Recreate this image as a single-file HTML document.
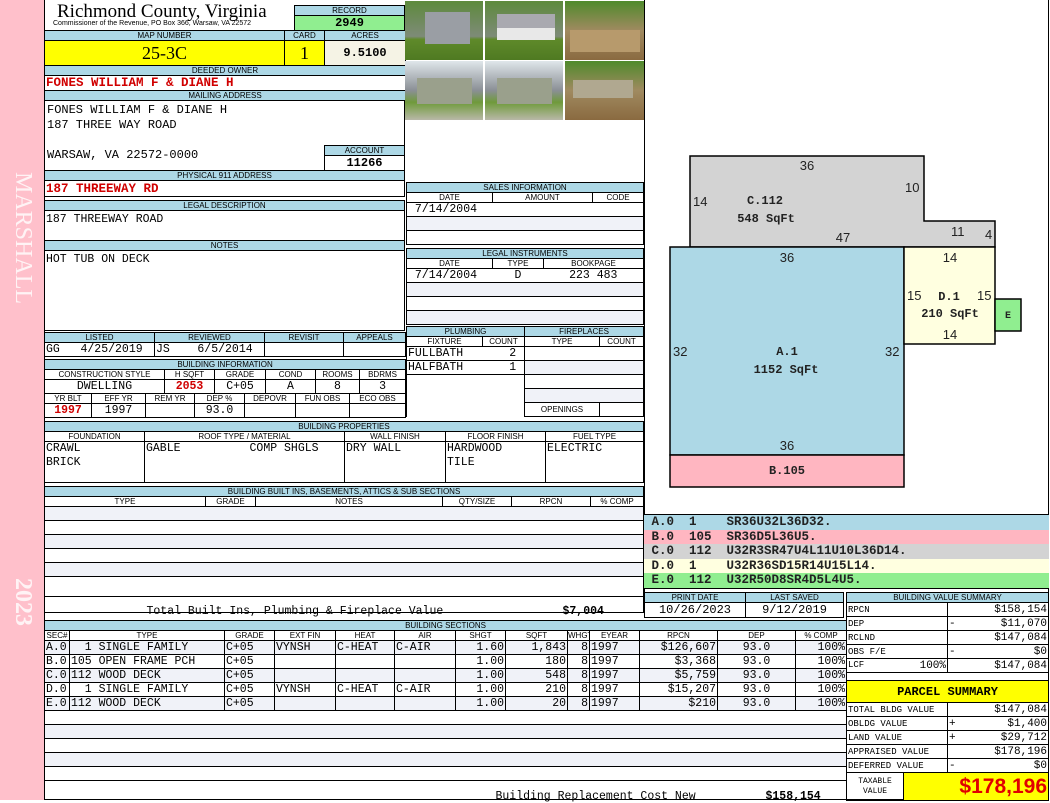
<!DOCTYPE html>
<html><head><meta charset="utf-8">
<style>
*{margin:0;padding:0;box-sizing:border-box}
body{width:1050px;height:800px;position:relative;background:#fff;overflow:hidden;font-family:"Liberation Sans",sans-serif}
.a{position:absolute}
table{border-collapse:collapse;table-layout:fixed;position:absolute}
td{border:1px solid #000;overflow:hidden;white-space:nowrap;padding:0 1px}
.h td,td.h{background:#add8e6;font:8px/9px "Liberation Sans",sans-serif;text-align:center;height:10px;padding:0}
.s td{font:8px/9px "Liberation Sans",sans-serif;text-align:center;height:10px;padding:0;background:#fff}
.m{font-family:"Liberation Mono",monospace;font-size:11.5px;line-height:13px}
.r td{height:14px;font-family:"Liberation Mono",monospace;font-size:11.5px;line-height:13px}
.alt{background:#f0f2f8}
.red{color:#d00000;font-weight:bold}
.c{text-align:center}.rt{text-align:right}
.box{position:absolute;border:1px solid #000;background:#fff}
.cr{height:14.5px;line-height:14.5px;white-space:pre;overflow:hidden}
</style></head><body>
<div class="a" style="left:0;top:0;width:44px;height:800px;background:#ffc0cb"></div>
<div class="a" style="left:8px;top:172px;width:30px;height:140px;"><div style="position:absolute;left:30px;top:0;transform-origin:0 0;transform:rotate(90deg);font:24px/30px 'Liberation Serif',serif;color:#fff3f5;white-space:nowrap">MARSHALL</div></div>
<div class="a" style="left:8px;top:578px;"><div style="position:absolute;left:30px;top:0;transform-origin:0 0;transform:rotate(90deg);font:bold 24px/30px 'Liberation Serif',serif;color:#fff3f5;white-space:nowrap">2023</div></div>
<div class="a" style="left:44px;top:0;width:1005px;height:800px;border:1px solid #000;border-top:none"></div>

<div class="a" style="left:57px;top:1px;font:19px/22px 'Liberation Serif',serif;color:#000">Richmond County, Virginia</div>
<div class="a" style="left:53px;top:20px;font:7px/8px 'Liberation Sans',sans-serif;white-space:nowrap">Commissioner of the Revenue, PO Box 366, Warsaw, VA 22572</div>
<table style="left:294px;top:5px;width:111px"><tr class="h"><td>RECORD</td></tr><tr><td class="c" style="background:#90ee90;font:bold 12px/13px 'Liberation Mono',monospace;height:15px">2949</td></tr></table>

<table style="left:44px;top:30px;width:361px"><colgroup><col style="width:240px"><col style="width:40px"><col style="width:81px"></colgroup>
<tr class="h"><td>MAP NUMBER</td><td>CARD</td><td>ACRES</td></tr>
<tr style="height:25px"><td class="c" style="background:#ffff00;font:18px 'Liberation Serif',serif">25-3C</td><td class="c" style="background:#ffff00;font:18px 'Liberation Serif',serif">1</td><td class="c" style="background:#f5f3e5;font:bold 12px 'Liberation Mono',monospace">9.5100</td></tr>
<tr class="h"><td colspan="3">DEEDED OWNER</td></tr>
<tr><td colspan="3" class="red" style="font-family:'Liberation Mono',monospace;font-size:12.5px;height:15px;line-height:14px">FONES WILLIAM F &amp; DIANE H</td></tr>
<tr class="h"><td colspan="3">MAILING ADDRESS</td></tr>
</table>
<div class="box" style="left:44px;top:100px;width:361px;height:71px"></div>
<div class="a m" style="left:47px;top:103px;font-size:12px;line-height:15px;white-space:pre">FONES WILLIAM F &amp; DIANE H
187 THREE WAY ROAD

WARSAW, VA 22572-0000</div>
<table style="left:324px;top:145px;width:81px"><tr class="h"><td>ACCOUNT</td></tr><tr><td class="c" style="font:bold 12px/13px 'Liberation Mono',monospace;height:15px">11266</td></tr></table>
<table style="left:44px;top:170px;width:361px"><tr class="h"><td>PHYSICAL 911 ADDRESS</td></tr><tr><td class="red" style="font-family:'Liberation Mono',monospace;font-size:12.5px;height:16px">187 THREEWAY RD</td></tr></table>

<table style="left:44px;top:200px;width:361px"><tr class="h"><td>LEGAL DESCRIPTION</td></tr><tr><td class="m" style="height:30px;vertical-align:top;padding-top:2px">187 THREEWAY ROAD</td></tr>
<tr class="h"><td>NOTES</td></tr><tr><td class="m" style="height:80px;vertical-align:top;padding-top:2px">HOT TUB ON DECK</td></tr></table>

<table style="left:44px;top:332px;width:361px"><colgroup><col style="width:110px"><col style="width:110px"><col style="width:79px"><col style="width:62px"></colgroup>
<tr class="h"><td>LISTED</td><td>REVIEWED</td><td>REVISIT</td><td>APPEALS</td></tr>
<tr class="r"><td>GG&nbsp;&nbsp;&nbsp;4/25/2019</td><td>JS&nbsp;&nbsp;&nbsp;&nbsp;6/5/2014</td><td></td><td></td></tr></table>

<table style="left:44px;top:359px;width:361px"><colgroup><col style="width:120px"><col style="width:50px"><col style="width:51px"><col style="width:50px"><col style="width:44px"><col style="width:46px"></colgroup>
<tr class="h"><td colspan="6">BUILDING INFORMATION</td></tr>
<tr class="s"><td>CONSTRUCTION STYLE</td><td>H SQFT</td><td>GRADE</td><td>COND</td><td>ROOMS</td><td>BDRMS</td></tr>
<tr class="r"><td class="c">DWELLING</td><td class="c red">2053</td><td class="c">C+05</td><td class="c">A</td><td class="c">8</td><td class="c">3</td></tr></table>
<table style="left:44px;top:393px;width:361px"><colgroup><col style="width:47px"><col style="width:54px"><col style="width:49px"><col style="width:50px"><col style="width:51px"><col style="width:54px"><col style="width:56px"></colgroup>
<tr class="s"><td>YR BLT</td><td>EFF YR</td><td>REM YR</td><td>DEP %</td><td>DEPOVR</td><td>FUN OBS</td><td>ECO OBS</td></tr>
<tr class="r"><td class="c red">1997</td><td class="c">1997</td><td></td><td class="c">93.0</td><td></td><td></td><td></td></tr></table>

<table style="left:44px;top:421px;width:599px"><colgroup><col style="width:100px"><col style="width:200px"><col style="width:101px"><col style="width:100px"><col style="width:98px"></colgroup>
<tr class="h"><td colspan="5">BUILDING PROPERTIES</td></tr>
<tr class="s"><td>FOUNDATION</td><td>ROOF TYPE / MATERIAL</td><td>WALL FINISH</td><td>FLOOR FINISH</td><td>FUEL TYPE</td></tr>
<tr><td class="m" style="height:41px;vertical-align:top;line-height:14px">CRAWL<br>BRICK</td><td class="m" style="vertical-align:top;white-space:pre">GABLE          COMP SHGLS</td><td class="m" style="vertical-align:top">DRY WALL</td><td class="m" style="vertical-align:top;line-height:14px">HARDWOOD<br>TILE</td><td class="m" style="vertical-align:top">ELECTRIC</td></tr></table>

<table style="left:44px;top:486px;width:599px"><colgroup><col style="width:161px"><col style="width:50px"><col style="width:187px"><col style="width:69px"><col style="width:79px"><col style="width:53px"></colgroup>
<tr class="h"><td colspan="6">BUILDING BUILT INS, BASEMENTS, ATTICS &amp; SUB SECTIONS</td></tr>
<tr class="s"><td>TYPE</td><td>GRADE</td><td>NOTES</td><td>QTY/SIZE</td><td>RPCN</td><td>% COMP</td></tr>
<tr class="r alt"><td colspan="6"></td></tr><tr class="r"><td colspan="6"></td></tr><tr class="r alt"><td colspan="6"></td></tr><tr class="r"><td colspan="6"></td></tr><tr class="r alt"><td colspan="6"></td></tr><tr class="r"><td colspan="6" style="height:20px"></td></tr>
<tr class="r"><td colspan="6" style="height:16px"><span style="position:absolute;left:102px;white-space:pre">Total Built Ins, Plumbing &amp; Fireplace Value</span><span style="position:absolute;left:518px;font-weight:bold">$7,004</span></td></tr></table>

<table style="left:44px;top:620px;width:802px"><colgroup><col style="width:25px"><col style="width:155px"><col style="width:50px"><col style="width:61px"><col style="width:59px"><col style="width:61px"><col style="width:50px"><col style="width:62px"><col style="width:22px"><col style="width:50px"><col style="width:78px"><col style="width:78px"><col style="width:51px"></colgroup>
<tr class="h"><td colspan="13">BUILDING SECTIONS</td></tr>
<tr class="s"><td>SEC#</td><td>TYPE</td><td>GRADE</td><td>EXT FIN</td><td>HEAT</td><td>AIR</td><td>SHGT</td><td>SQFT</td><td>WHGT</td><td>EYEAR</td><td>RPCN</td><td>DEP</td><td>% COMP</td></tr>
<tr class="r alt"><td>A.0</td><td>&nbsp;&nbsp;1 SINGLE FAMILY</td><td>C+05</td><td>VYNSH</td><td>C-HEAT</td><td>C-AIR</td><td class="rt">1.60</td><td class="rt">1,843</td><td class="rt">8</td><td>1997</td><td class="rt">$126,607</td><td class="c">93.0</td><td class="rt">100%</td></tr>
<tr class="r"><td>B.0</td><td>105 OPEN FRAME PCH</td><td>C+05</td><td></td><td></td><td></td><td class="rt">1.00</td><td class="rt">180</td><td class="rt">8</td><td>1997</td><td class="rt">$3,368</td><td class="c">93.0</td><td class="rt">100%</td></tr>
<tr class="r alt"><td>C.0</td><td>112 WOOD DECK</td><td>C+05</td><td></td><td></td><td></td><td class="rt">1.00</td><td class="rt">548</td><td class="rt">8</td><td>1997</td><td class="rt">$5,759</td><td class="c">93.0</td><td class="rt">100%</td></tr>
<tr class="r"><td>D.0</td><td>&nbsp;&nbsp;1 SINGLE FAMILY</td><td>C+05</td><td>VYNSH</td><td>C-HEAT</td><td>C-AIR</td><td class="rt">1.00</td><td class="rt">210</td><td class="rt">8</td><td>1997</td><td class="rt">$15,207</td><td class="c">93.0</td><td class="rt">100%</td></tr>
<tr class="r alt"><td>E.0</td><td>112 WOOD DECK</td><td>C+05</td><td></td><td></td><td></td><td class="rt">1.00</td><td class="rt">20</td><td class="rt">8</td><td>1997</td><td class="rt">$210</td><td class="c">93.0</td><td class="rt">100%</td></tr>
<tr class="r"><td colspan="13"></td></tr><tr class="r alt"><td colspan="13"></td></tr><tr class="r"><td colspan="13"></td></tr><tr class="r alt"><td colspan="13"></td></tr><tr class="r"><td colspan="13"></td></tr>
<tr class="r"><td colspan="13" style="height:19px"><span style="position:absolute;left:451px;white-space:pre">Building Replacement Cost New</span><span style="position:absolute;left:721px;font-weight:bold">$158,154</span></td></tr></table>

<svg class="a" style="left:405px;top:0" width="240" height="121">
<defs><linearGradient id="g1" x1="0" y1="0" x2="0" y2="1"><stop offset="0" stop-color="#5d8a3c"/><stop offset=".6" stop-color="#7e8b78"/><stop offset=".65" stop-color="#5f8a2a"/><stop offset="1" stop-color="#4f7a22"/></linearGradient>
<linearGradient id="g2" x1="0" y1="0" x2="0" y2="1"><stop offset="0" stop-color="#dfe6ea"/><stop offset=".5" stop-color="#8a8f95"/><stop offset=".7" stop-color="#6f9a3a"/><stop offset="1" stop-color="#b8b8a8"/></linearGradient>
<linearGradient id="g3" x1="0" y1="0" x2="0" y2="1"><stop offset="0" stop-color="#4f8a2c"/><stop offset=".5" stop-color="#a08a60"/><stop offset="1" stop-color="#8a6a40"/></linearGradient></defs>
<rect x="0" y="1" width="78" height="59" fill="url(#g1)"/><rect x="20" y="12" width="45" height="32" fill="#9a9ea4"/>
<rect x="80" y="1" width="78" height="59" fill="url(#g1)"/><rect x="92" y="14" width="58" height="26" fill="#a9a9b0"/><rect x="92" y="28" width="58" height="12" fill="#e8e8e8"/>
<rect x="160" y="1" width="80" height="59" fill="url(#g3)"/><rect x="165" y="30" width="70" height="22" fill="#b79a6c"/>
<rect x="0" y="61" width="78" height="59" fill="url(#g2)"/><rect x="12" y="78" width="55" height="26" fill="#9aa08c"/>
<rect x="80" y="61" width="78" height="59" fill="url(#g2)"/><rect x="92" y="78" width="55" height="26" fill="#9aa08c"/>
<rect x="160" y="61" width="80" height="59" fill="url(#g3)"/><rect x="168" y="80" width="60" height="18" fill="#b0a890"/>
</svg>

<table style="left:406px;top:182px;width:237px"><colgroup><col style="width:86px"><col style="width:100px"><col style="width:51px"></colgroup>
<tr class="h"><td colspan="3">SALES INFORMATION</td></tr>
<tr class="s"><td>DATE</td><td>AMOUNT</td><td>CODE</td></tr>
<tr class="r"><td colspan="3">&nbsp;7/14/2004</td></tr><tr class="r alt"><td colspan="3"></td></tr><tr class="r"><td colspan="3"></td></tr></table>
<table style="left:406px;top:248px;width:237px"><colgroup><col style="width:86px"><col style="width:51px"><col style="width:100px"></colgroup>
<tr class="h"><td colspan="3">LEGAL INSTRUMENTS</td></tr>
<tr class="s"><td>DATE</td><td>TYPE</td><td>BOOKPAGE</td></tr>
<tr class="r"><td style="border-right:none">&nbsp;7/14/2004</td><td class="c" style="border:none">D</td><td class="c" style="border-left:none">223 483</td></tr><tr class="r alt"><td colspan="3"></td></tr><tr class="r"><td colspan="3"></td></tr><tr class="r alt"><td colspan="3"></td></tr></table>
<table style="left:406px;top:326px;width:237px"><colgroup><col style="width:76px"><col style="width:42px"><col style="width:75px"><col style="width:44px"></colgroup>
<tr class="h"><td colspan="2">PLUMBING</td><td colspan="2">FIREPLACES</td></tr>
<tr class="s"><td>FIXTURE</td><td>COUNT</td><td>TYPE</td><td>COUNT</td></tr>
<tr class="r"><td style="border-right:none">FULLBATH</td><td class="rt" style="border-left:none">2&nbsp;</td><td colspan="2"></td></tr>
<tr class="r"><td style="border-right:none">HALFBATH</td><td class="rt" style="border-left:none">1&nbsp;</td><td colspan="2" class="alt"></td></tr>
<tr class="r"><td colspan="2" style="border-bottom:none"></td><td colspan="2"></td></tr>
<tr class="r"><td colspan="2" style="border-top:none;border-bottom:none"></td><td colspan="2" class="alt"></td></tr>
<tr class="r"><td colspan="2" style="border:none;border-left:1px solid #000"></td><td class="s c" style="font:8px 'Liberation Sans',sans-serif">OPENINGS</td><td></td></tr></table>

<div class="a" style="left:644px;top:0;width:1px;height:592px;background:#000"></div>
<svg class="a" style="left:645px;top:0" width="404" height="514" font-family="Liberation Sans">
<g transform="translate(-645,0)">
<polygon points="690,156 924,156 924,221 995,221 995,247 690,247" fill="#d3d3d3" stroke="#000" stroke-width="1.5"/>
<rect x="670" y="247" width="234" height="208" fill="#add8e6" stroke="#000" stroke-width="1.5"/>
<rect x="670" y="455" width="234" height="32" fill="#ffb6c1" stroke="#000" stroke-width="1.5"/>
<rect x="904" y="247" width="91" height="97" fill="#ffffe0" stroke="#000" stroke-width="1.5"/>
<rect x="995" y="299" width="26" height="32" fill="#90ee90" stroke="#000" stroke-width="1.5"/>
<g font-size="13" fill="#222">
<text x="807" y="170" text-anchor="middle">36</text><text x="693" y="206">14</text><text x="905" y="192">10</text>
<text x="843" y="242" text-anchor="middle">47</text><text x="951" y="236">11</text><text x="985" y="239">4</text>
<text x="787" y="262" text-anchor="middle">36</text><text x="950" y="262" text-anchor="middle">14</text>
<text x="907" y="300">15</text><text x="977" y="300">15</text><text x="950" y="339" text-anchor="middle">14</text>
<text x="673" y="356">32</text><text x="885" y="356">32</text><text x="787" y="450" text-anchor="middle">36</text></g>
<g font-family="Liberation Mono" font-weight="bold" font-size="12" fill="#222" text-anchor="middle">
<text x="765" y="204">C.112</text><text x="766" y="222">548 SqFt</text>
<text x="787" y="355">A.1</text><text x="786" y="373">1152 SqFt</text>
<text x="949" y="300">D.1</text><text x="950" y="317">210 SqFt</text>
<text x="1008" y="318" font-size="10">E</text><text x="787" y="474">B.105</text></g>
</g></svg>
<div class="a m" style="left:644px;top:514px;width:405px;font-weight:bold;font-size:12.5px;color:#222;border-top:1px solid #000;border-bottom:1px solid #000">
<div class="cr" style="background:#add8e6"> A.0  1    SR36U32L36D32.</div>
<div class="cr" style="background:#ffb6c1"> B.0  105  SR36D5L36U5.</div>
<div class="cr" style="background:#d3d3d3"> C.0  112  U32R3SR47U4L11U10L36D14.</div>
<div class="cr" style="background:#ffffe0"> D.0  1    U32R36SD15R14U15L14.</div>
<div class="cr" style="background:#90ee90"> E.0  112  U32R50D8SR4D5L4U5.</div>
</div>

<table style="left:644px;top:592px;width:199px"><colgroup><col style="width:101px"><col style="width:98px"></colgroup>
<tr class="h"><td>PRINT DATE</td><td>LAST SAVED</td></tr>
<tr><td class="c m" style="height:15px;font-size:12px">10/26/2023</td><td class="c m" style="font-size:12px">9/12/2019</td></tr></table>

<table style="left:846px;top:592px;width:202px;font-family:'Liberation Mono',monospace;font-size:11px"><colgroup><col style="width:101px"><col style="width:101px"></colgroup>
<tr class="h"><td colspan="2">BUILDING VALUE SUMMARY</td></tr>
<tr style="height:14px"><td style="font-size:9px">RPCN</td><td class="rt">$158,154</td></tr>
<tr style="height:14px"><td style="font-size:9px">DEP</td><td class="rt"><span style="float:left">-</span>$11,070</td></tr>
<tr style="height:14px"><td style="font-size:9px">RCLND</td><td class="rt">$147,084</td></tr>
<tr style="height:14px"><td style="font-size:9px">OBS F/E</td><td class="rt"><span style="float:left">-</span>$0</td></tr>
<tr style="height:14px"><td style="font-size:9px">LCF<span style="float:right;font-size:11px">100%</span></td><td class="rt">$147,084</td></tr></table>

<table style="left:846px;top:680px;width:202px;font-family:'Liberation Mono',monospace;font-size:11px"><colgroup><col style="width:57px"><col style="width:44px"><col style="width:101px"></colgroup>
<tr style="height:22px"><td colspan="3" class="c" style="background:#ffff00;font:bold 12px 'Liberation Mono',monospace">PARCEL SUMMARY</td></tr>
<tr style="height:14px"><td colspan="2" style="font-size:9px">TOTAL BLDG VALUE</td><td class="rt">$147,084</td></tr>
<tr style="height:14px"><td colspan="2" style="font-size:9px">OBLDG VALUE</td><td class="rt"><span style="float:left">+</span>$1,400</td></tr>
<tr style="height:14px"><td colspan="2" style="font-size:9px">LAND VALUE</td><td class="rt"><span style="float:left">+</span>$29,712</td></tr>
<tr style="height:14px"><td colspan="2" style="font-size:9px">APPRAISED VALUE</td><td class="rt">$178,196</td></tr>
<tr style="height:14px"><td colspan="2" style="font-size:9px">DEFERRED VALUE</td><td class="rt"><span style="float:left">-</span>$0</td></tr>
<tr style="height:28px"><td class="c" style="font-size:8px;line-height:10px">TAXABLE<br>VALUE</td><td colspan="2" class="rt" style="background:#ffff00;color:#e00000;font:bold 21px 'Liberation Sans',sans-serif">$178,196</td></tr></table>
</body></html>
